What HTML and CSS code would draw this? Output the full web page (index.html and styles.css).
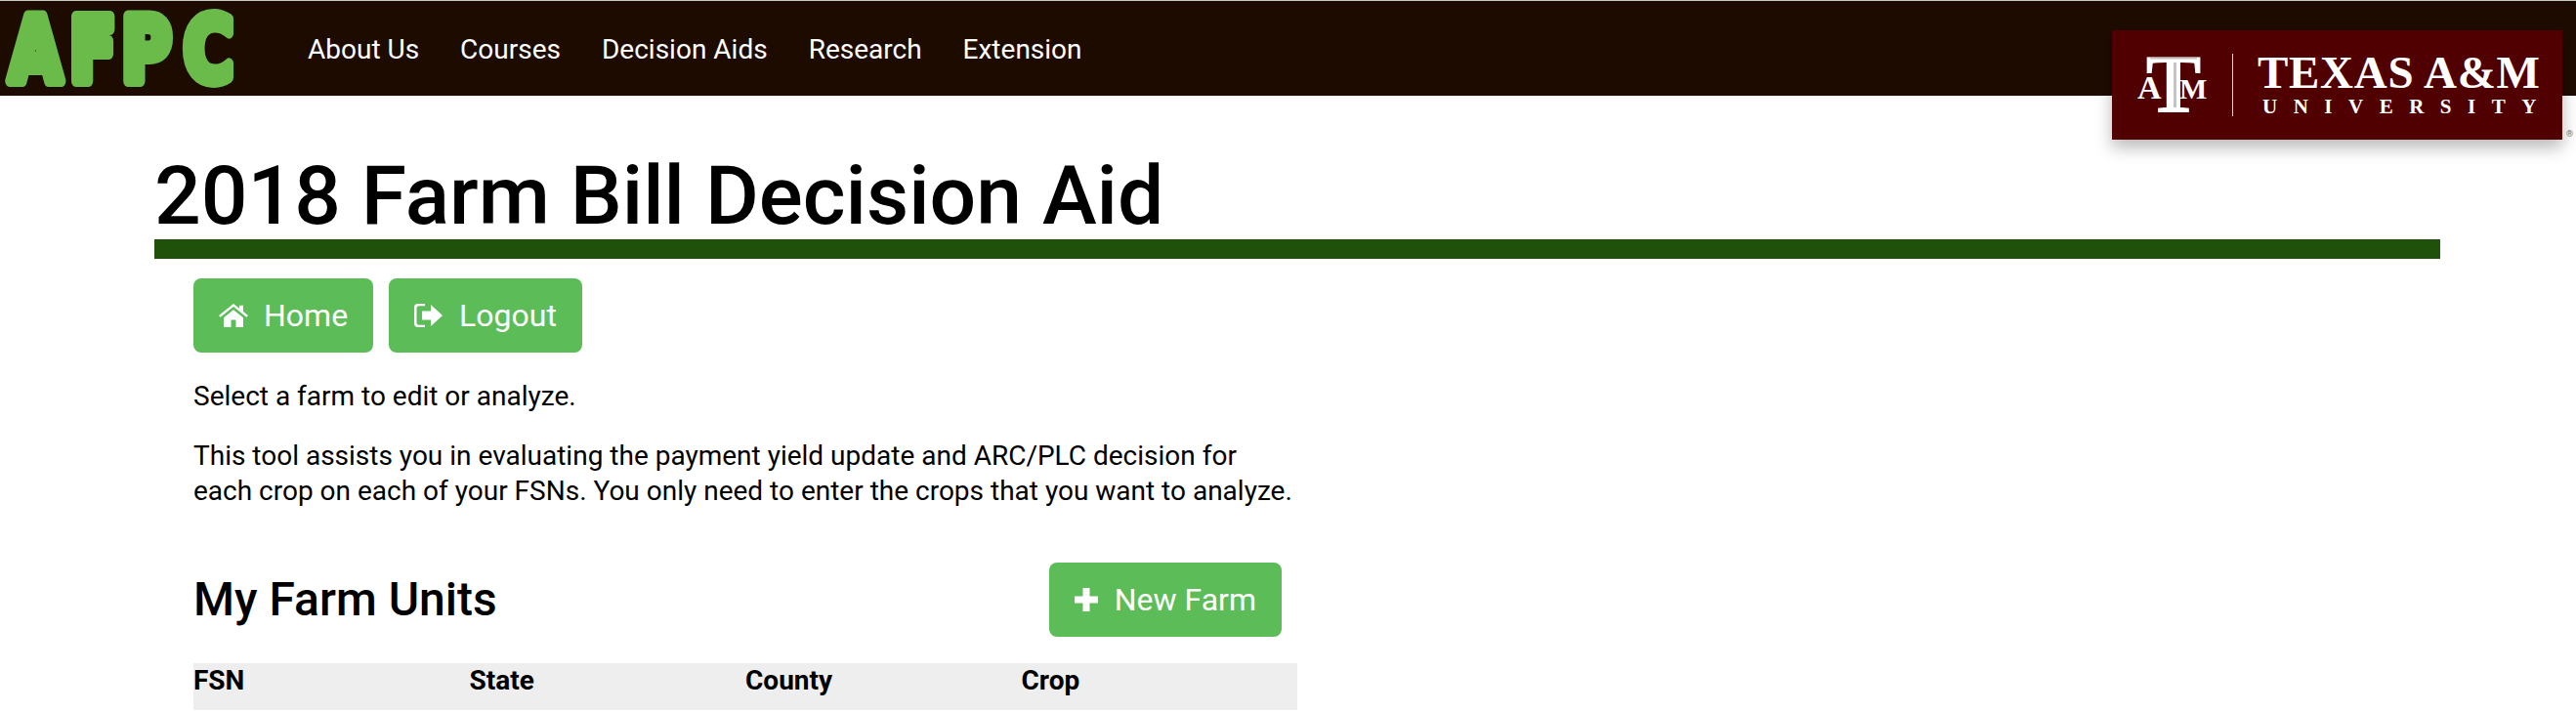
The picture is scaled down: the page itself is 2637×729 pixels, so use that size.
FILE: index.html
```html
<!DOCTYPE html>
<html lang="en">
<head>
<meta charset="utf-8">
<title>2018 Farm Bill Decision Aid</title>
<link rel="stylesheet" href="styles.css">
</head>
<body>
<header class="topbar">
  <svg class="afpc-logo" viewBox="0 -12 250 124" width="250" height="124" role="img" aria-label="AFPC">
    <text class="afpc-text" transform="translate(0 82) scale(.77 1)" x="12.500 92.700 161.600 244">AFPC</text>
  </svg>
  <nav class="nav">
    <a href="#">About Us</a>
    <a href="#">Courses</a>
    <a href="#">Decision Aids</a>
    <a href="#">Research</a>
    <a href="#">Extension</a>
  </nav>
</header>
<div class="tamu">
  <svg class="tamu-mark" viewBox="0 -20 72 100" width="72" height="100" role="img" aria-label="ATM">
    <text class="tm-text"><tspan class="tm-s" x="0" y="44">A</tspan><tspan class="tm-t" x="9" y="58">T</tspan><tspan class="tm-m" x="43" y="44">M</tspan></text>
    <rect class="tm-bevel" x="37" y="7" width="3" height="46"/>
    <rect class="tm-bevel" x="13" y="2" width="48" height="1.500"/>
  </svg>
  <span class="tamu-rule"></span>
  <div class="tamu-name">
    <div class="tamu-big">TEXAS A&amp;M</div>
    <div class="tamu-small">UNIVERSITY</div>
  </div>
</div>
<span class="reg">®</span>
<main class="page">
  <h1 class="title">2018 Farm Bill Decision Aid</h1>
  <div class="content">
    <div class="actions">
      <a class="btn" href="#">
        <svg class="ico" viewBox="0 0 30 26" preserveAspectRatio="none"><path d="M15 0 0 13l1.6 1.8L15 3.2l13.400 11.600L30 13l-5-4.400V2h-4v3.100zM5 15.500V26h7.500v-8h5v8H25V15.500L15 6.800z"/></svg>
        Home
      </a>
      <a class="btn" href="#">
        <svg class="ico ico-out" viewBox="0 0 30 26" preserveAspectRatio="none"><path d="M4 0h7v2.500H5A2.500 2.500 0 0 0 2.500 5v16A2.500 2.500 0 0 0 5 23.500h6V26H4a4 4 0 0 1-4-4V4a4 4 0 0 1 4-4z"/><path d="M8 8h9V1l12 12-12 12v-7H8z"/></svg>
        Logout
      </a>
    </div>
    <p class="lead">Select a farm to edit or analyze.</p>
    <p class="lead">This tool assists you in evaluating the payment yield update and ARC/PLC decision for each crop on each of your FSNs. You only need to enter the crops that you want to analyze.</p>
    <div class="units-head">
      <h2 class="units-title">My Farm Units</h2>
      <a class="btn" href="#">
        <svg class="ico ico-plus" viewBox="0 0 24 24"><path d="M8.500 0h7v8.500H24v7h-8.500V24h-7v-8.500H0v-7h8.500z"/></svg>
        New Farm
      </a>
    </div>
    <div class="table-head">
      <div>FSN</div><div>State</div><div>County</div><div>Crop</div>
    </div>
  </div>
</main>
</body>
</html>
```
FILE: styles.css
```css
* { box-sizing: border-box; }
html, body { margin: 0; height: 729px; overflow: hidden; background: #fff; }
body { font-family: Roboto, "Liberation Sans", sans-serif; color: #000; border-top: 1px solid #c9c9c9; }
a { text-decoration: none; }

.topbar { height: 97px; background: #1e0b00; display: flex; align-items: flex-start; }
.afpc-logo { flex: none; margin-top: -12px; margin-bottom: -15px; }
.afpc-text { font-family: "DejaVu Sans", sans-serif; font-weight: 700; font-size: 90px; fill: #6abb4a; stroke: #6abb4a; stroke-width: 12px; stroke-linejoin: round; }
.nav { display: flex; gap: 42px; margin-left: 65px; height: 97px; align-items: center; padding-top: 2px; }
.nav a { color: #fff; font-size: 28px; }

.tamu { position: absolute; left: 2162px; top: 31px; width: 461px; height: 112px; background: #500000; box-shadow: 0 8px 16px rgba(0,0,0,.28); display: flex; align-items: center; padding-left: 26px; }
.tamu-mark { flex: none; }
.tm-text { font-family: "Liberation Serif", serif; font-weight: 700; fill: #fff; }
.tm-t { font-size: 84px; stroke: #fff; stroke-width: 1.200px; }
.tm-s { font-size: 34px; }
.tm-m { font-size: 30px; }
.tm-bevel { fill: #c4c4c4; }
.tamu-rule { width: 1px; height: 64px; background: #e6dcdc; margin-left: 25px; margin-right: 25px; flex: none; }
.tamu-name { color: #fff; font-family: "Liberation Serif", serif; display: flex; flex-direction: column; }
.tamu-big { font-size: 47px; font-weight: 700; line-height: 38px; letter-spacing: .7px; }
.tamu-small { font-size: 21px; font-weight: 700; line-height: 22px; letter-spacing: 16.500px; margin-top: 5px; padding-left: 5px; }
.reg { position: absolute; left: 2627px; top: 132px; font-size: 9px; color: #8a6a6a; }

.page { padding-left: 158px; width: 2498px; }
.title { margin: 0; padding-top: 63px; font-size: 84px; font-weight: 500; line-height: 80px; height: 167px; border-bottom: 20px solid #1f510a; }
.content { width: 1170px; padding-left: 40px; }
.actions { display: flex; gap: 16px; margin-top: 20px; }
.btn { display: inline-flex; align-items: center; height: 76px; padding: 0 26px; background: #5cbd58; color: #fff; font-size: 32px; border-radius: 8px; }
.ico { width: 30px; height: 24px; fill: #fff; margin-right: 16px; flex: none; }
.ico-plus { width: 24px; height: 24px; margin-right: 17px; }
.lead { margin: 0 0 25px; font-size: 28px; line-height: 36px; width: 1130px; }
.actions + .lead { margin-top: 27px; }
.units-head { display: flex; justify-content: space-between; align-items: center; width: 1114px; margin-top: 55px; }
.units-title { margin: 0 0 2px; font-size: 48px; font-weight: 500; }
.table-head { display: grid; grid-template-columns: repeat(4, 282.500px); height: 48px; margin-top: 27px; background: #eee; font-size: 28px; line-height: 36px; font-weight: 700; width: 1130px; }
```
